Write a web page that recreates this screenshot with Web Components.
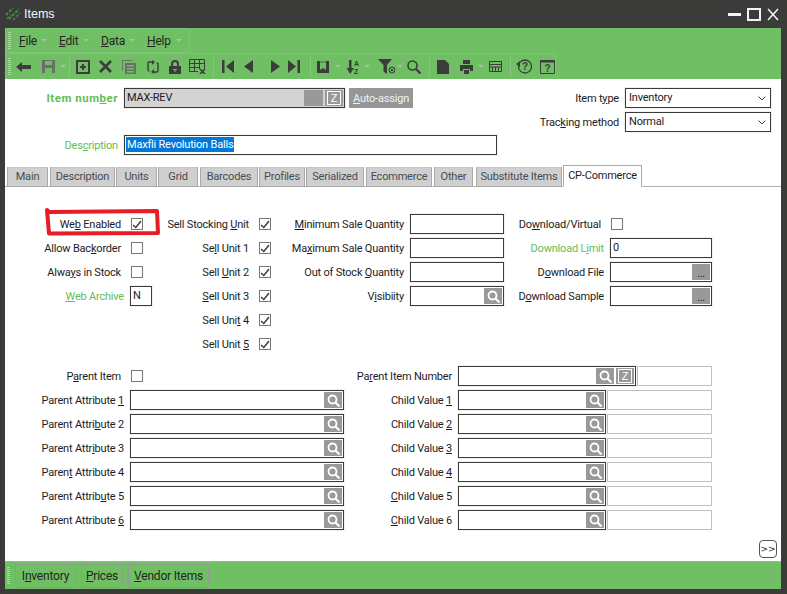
<!DOCTYPE html>
<html>
<head>
<meta charset="utf-8">
<title>Items</title>
<style>
  html, body { margin: 0; padding: 0; width: 787px; height: 594px; overflow: hidden; background: #3b3c3a; }
  body { font: 11px Roboto, "Liberation Sans", sans-serif; letter-spacing: -0.2px; color: #1c1c24; }
</style>
</head>
<body>
<script>
const DARK = '#3c3d3b';
const GREY = '#6c6e6b';
const ICONS = {
  back: [16, 12, `<path fill="${DARK}" d="M0 6 6 1V4H15V8H6V11Z"/>`],
  disk: [13, 13, `<path fill="${GREY}" fill-rule="evenodd" d="M0 0H13V13H0ZM3 1V5H10V1ZM3 8V13H10V8Z"/>`],
  plus: [14, 14, `<path fill="${DARK}" fill-rule="evenodd" d="M0 0H14V14H0ZM2 2V12H12V2ZM6 4H8V6H10V8H8V10H6V8H4V6H6Z"/>`],
  cross: [13, 13, `<path stroke="${DARK}" stroke-width="2.6" d="M1 1 12 12M12 1 1 12"/>`],
  copy: [14, 14, `<path fill="none" stroke="${GREY}" d="M.5 .5H10.5M.5 .5V10.5"/><path fill="${GREY}" fill-rule="evenodd" d="M3 3H14V14H3ZM5 5V6.5H12V5ZM5 8V9.5H12V8ZM5 11V12.5H12V11Z"/>`],
  refresh: [12, 14, `<path fill="none" stroke="${DARK}" stroke-width="1.4" d="M6 2H2Q1 2 1 3V10Q1 11 2.5 11M6 12H10Q11 12 11 11V4Q11 3 9.5 3"/><path fill="${DARK}" d="M5 0 8 2 5 5ZM7 9 4 12 7 14Z"/>`],
  lock: [12, 14, `<path fill="none" stroke="${DARK}" stroke-width="2" d="M3 7V4Q3 1 6 1T9 4V7"/><path fill="${DARK}" fill-rule="evenodd" d="M0 6H12V14H0ZM4 9V10H5.5V12H6.5V10H8V9Z"/>`],
  gridx: [17, 15, `<path fill="none" stroke="${DARK}" d="M.5 .5H15.5V10M.5 .5V12.5H9M.5 4.5H15.5M.5 8.5H11M5.5 .5V12.5M10.5 .5V10"/><path stroke="${DARK}" stroke-width="1.6" d="M11 10 16 15M16 10 11 15"/>`],
  first: [12, 13, `<path fill="${DARK}" d="M0 0H2.5V13H0ZM12 0V13L4 6.5Z"/>`],
  prev: [9, 13, `<path fill="${DARK}" d="M9 0V13L0 6.5Z"/>`],
  next: [9, 13, `<path fill="${DARK}" d="M0 0V13L9 6.5Z"/>`],
  last: [12, 13, `<path fill="${DARK}" d="M0 0 8 6.5 0 13ZM9.5 0H12V13H9.5Z"/>`],
  book: [12, 12, `<path fill="${DARK}" d="M0 0H3V9L6 7 9 9V0H12V12H0Z"/><path fill="${DARK}" d="M3 0H9V2H3Z" opacity=".35"/>`],
  az: [14, 16, `<path fill="${DARK}" d="M3 1H5.5V9H8L4.2 15 .5 9H3Z"/><text x="8" y="7" font-size="7" font-weight="bold" font-family="Liberation Sans" fill="${DARK}">A</text><text x="8" y="14.5" font-size="7" font-weight="bold" font-family="Liberation Sans" fill="${DARK}">Z</text>`],
  filter: [18, 15, `<path fill="${DARK}" d="M0 0H14L9 6V15L5.5 12.5V6Z"/><circle cx="14" cy="11" r="3" fill="none" stroke="${DARK}"/><path stroke="${DARK}" d="M12.5 9.5 15.5 12.5M15.5 9.5 12.5 12.5"/>`],
  find: [14, 14, `<circle cx="5.5" cy="5.5" r="4.5" fill="none" stroke="${DARK}" stroke-width="1.6"/><path stroke="${DARK}" stroke-width="2.2" d="M9 9 13.5 13.5"/>`],
  doc: [12, 14, `<path fill="${DARK}" d="M0 0H8L12 4V14H0Z"/>`],
  print: [13, 14, `<path fill="${DARK}" fill-rule="evenodd" d="M3 0H10V4H3ZM0 5H13V11H10V9H3V11H0ZM4 10H9V14H4Z"/>`],
  calc: [13, 11, `<path fill="none" stroke="${DARK}" d="M.5 .5H12.5V10.5H.5ZM.5 3.5H12.5M.5 6H12.5M3.5 6V10.5M6.5 6V10.5M9.5 6V10.5"/>`],
  help: [16, 15, `<circle cx="9" cy="7.5" r="6.5" fill="none" stroke="${DARK}" stroke-width="1.3"/><path fill="${DARK}" d="M0 5 4 2V8Z"/><text x="9" y="11" font-size="10" font-weight="bold" text-anchor="middle" font-family="Liberation Sans" fill="${DARK}">?</text>`],
  whats: [15, 14, `<path fill="none" stroke="${DARK}" d="M.5 .5H14.5V13.5H.5Z"/><path fill="${DARK}" d="M0 0H15V2.5H0Z"/><text x="7.5" y="12" font-size="10" font-weight="bold" text-anchor="middle" font-family="Liberation Sans" fill="${DARK}">?</text>`],
  drop: [6, 3, `<path fill="#b4b8b2" d="M0 0H6L3 3Z"/>`],
};

class ToolIcon extends HTMLElement {
  connectedCallback() {
    const [w, h, body] = ICONS[this.getAttribute('name')];
    this.attachShadow({ mode: 'open' }).innerHTML = `
      <style>:host { display: block; flex: none; line-height: 0; } svg { display: block; }</style>
      <svg width="${w}" height="${h}" viewBox="0 0 ${w} ${h}">${body}</svg>`;
  }
}
customElements.define('tool-icon', ToolIcon);

class GripBar extends HTMLElement {
  constructor() {
    super();
    this.attachShadow({ mode: 'open' }).innerHTML = `
      <style>
        :host { display: block; flex: none; width: 3px; height: 17px;
          background: repeating-linear-gradient(to bottom, #a9d8a2 0 1px, transparent 1px 2px); }
      </style>`;
  }
}
customElements.define('grip-bar', GripBar);

class AppWindow extends HTMLElement {
  constructor() {
    super();
    this.attachShadow({ mode: 'open' }).innerHTML = `
      <style>
        :host { display: flex; flex-direction: column; width: 787px; height: 594px; background: #3b3c3a; box-sizing: border-box; padding: 0 6px 5px 5px; }
        .title { flex: none; height: 28px; margin: 0 -6px 0 -5px; display: flex; align-items: center; color: #f4f4f4; font: 12.5px "Liberation Sans", sans-serif; letter-spacing: 0; }
        .title svg.logo { margin: 0 3px 0 5px; }
        .buttons { margin-left: auto; display: flex; align-items: center; gap: 6px; padding-right: 8px; }
        .buttons svg { display: block; flex: none; }
        .body { flex: 1; background: #fff; display: flex; flex-direction: column; min-height: 0; }
      </style>
      <div class="title">
        <svg class="logo" width="16" height="16" viewBox="0 0 16 16">
          <path stroke="#3f8f3f" stroke-width="2" stroke-dasharray="3 1.5" d="M1 9 8 2M4 13 14 3"/>
          <path stroke="#5f625e" stroke-width="2" stroke-dasharray="3 1.5" d="M2 13 6 9M8 14 15 7"/>
        </svg>
        <span>Items</span>
        <div class="buttons">
          <svg width="13" height="3"><rect width="13" height="3" fill="#f4f4f4"/></svg>
          <svg width="14" height="13"><rect x="1" y="1" width="12" height="11" fill="none" stroke="#f4f4f4" stroke-width="2"/></svg>
          <svg width="12" height="13"><path stroke="#f4f4f4" stroke-width="1.5" d="M1 1 11 12M11 1 1 12"/></svg>
        </div>
      </div>
      <slot name="bars"></slot>
      <div class="body"><slot></slot></div>
      <slot name="footer"></slot>`;
  }
}
customElements.define('app-window', AppWindow);

class GreenBars extends HTMLElement {
  constructor() {
    super();
    this.attachShadow({ mode: 'open' }).innerHTML = `
      <style>
        :host { display: block; height: 51px; background: #70bf65; }
      </style>
      <slot></slot>`;
  }
}
customElements.define('green-bars', GreenBars);

class MenuBar extends HTMLElement {
  constructor() {
    super();
    this.attachShadow({ mode: 'open' }).innerHTML = `
      <style>
        :host { display: flex; align-items: center; box-sizing: border-box; width: 185px; height: 25px; border: 1px solid #7fc576; border-radius: 2px; padding-left: 2px; font: 12px Roboto, "Liberation Sans", sans-serif; color: #23251f; }
        grip-bar { margin-right: 8px; }
      </style>
      <grip-bar></grip-bar><slot></slot>`;
  }
}
customElements.define('menu-bar', MenuBar);

class MenuItem extends HTMLElement {
  constructor() {
    super();
    this.attachShadow({ mode: 'open' }).innerHTML = `
      <style>
        :host { display: flex; align-items: center; justify-content: space-between; margin-right: 12px; }
      </style>
      <slot></slot><tool-icon name="drop"></tool-icon>`;
  }
}
customElements.define('menu-item', MenuItem);

class ToolBar extends HTMLElement {
  constructor() {
    super();
    this.attachShadow({ mode: 'open' }).innerHTML = `
      <style>
        :host { display: flex; align-items: center; box-sizing: border-box; width: 551px; height: 26px; border: 1px solid #7fc576; border-bottom: 0; padding-left: 2px; }
        ::slotted(.sep) { width: 1px; height: 21px; background: #85c97c; }
      </style>
      <grip-bar></grip-bar><slot></slot>`;
  }
}
customElements.define('tool-bar', ToolBar);

class FormLabel extends HTMLElement {
  constructor() {
    super();
    this.attachShadow({ mode: 'open' }).innerHTML = `
      <style>
        :host { display: flex; align-items: center; justify-content: flex-end; white-space: nowrap; }
        :host([link]) { color: #5fbe55; }
        :host([strong]) { color: #5fbe55; font-weight: bold; font-size: 11.5px; letter-spacing: .5px; }
        :host([inset]) { padding-right: 3px; }
      </style>
      <span><slot></slot></span>`;
  }
}
customElements.define('form-label', FormLabel);

class FormCheck extends HTMLElement {
  connectedCallback() {
    const mark = this.hasAttribute('checked')
      ? `<svg width="10" height="9"><path fill="none" stroke="#3c3d3b" stroke-width="1.5" d="M1 5 3.8 7.5 9 1"/></svg>` : '';
    this.attachShadow({ mode: 'open' }).innerHTML = `
      <style>
        :host { display: flex; align-items: center; }
        .box { box-sizing: border-box; width: 12px; height: 12px; border: 1px solid #777; background: #fff; display: flex; align-items: center; justify-content: center; margin-left: var(--check-inset, 1px); }
      </style>
      <div class="box">${mark}</div>`;
  }
}
customElements.define('form-check', FormCheck);

class FormInput extends HTMLElement {
  connectedCallback() {
    const search = `<svg width="13" height="13" viewBox="0 0 13 13"><circle cx="5.5" cy="5.5" r="4" fill="none" stroke="#fff" stroke-width="1.8"/><path stroke="#fff" stroke-width="2.2" d="M8.5 8.5 12.5 12.5"/></svg>`;
    const value = this.getAttribute('value') || '';
    let btns = '';
    if (this.hasAttribute('blank')) btns += `<div class="btn wide"></div>`;
    if (this.hasAttribute('lookup')) btns += `<div class="btn">${search}</div>`;
    if (this.hasAttribute('more')) btns += `<div class="btn dots">...</div>`;
    if (this.hasAttribute('zoom')) btns += `<div class="btn zoom"><span>Z</span></div>`;
    this.attachShadow({ mode: 'open' }).innerHTML = `
      <style>
        :host { display: flex; align-items: center; }
        .input { box-sizing: border-box; flex: 1; width: var(--w, auto); height: 20px; border: 1px solid #3b3c3a; box-shadow: 0 0 0 1px #f1f1ec; background: #fff; display: flex; padding: 1px; align-items: stretch; overflow: hidden; }
        :host([readonly]) .input { background: #d3d3d3; }
        .text { flex: 1; line-height: 15px; padding-left: 1px; white-space: nowrap; overflow: hidden; }
        .text span.sel { background: #0078d7; color: #fff; display: inline-block; padding: 0 1px; margin-left: -1px; }
        .btn { flex: none; width: 18px; background: #999; display: flex; align-items: center; justify-content: center; }
        .btn.wide { width: 19px; }
        .btn.dots { color: #222; align-items: flex-end; line-height: 12px; }
        .btn.zoom { margin-left: 2px; }
        .btn.zoom span { box-sizing: border-box; width: 14px; height: 14px; border: 1px solid #fff; color: #fff; font: 11px/12px "Liberation Sans", sans-serif; text-align: center; }
      </style>
      <div class="input">
        <div class="text">${this.hasAttribute('selected') ? `<span class="sel">${value}</span>` : value}</div>
        ${btns}
      </div>`;
  }
}
customElements.define('form-input', FormInput);

class FormBox extends HTMLElement {
  constructor() {
    super();
    this.attachShadow({ mode: 'open' }).innerHTML = `
      <style>
        :host { display: block; box-sizing: border-box; height: 20px; border: 1px solid #c0c0c0; background: #fff; }
      </style>`;
  }
}
customElements.define('form-box', FormBox);

class FormSelect extends HTMLElement {
  connectedCallback() {
    this.attachShadow({ mode: 'open' }).innerHTML = `
      <style>
        :host { display: flex; align-items: center; box-sizing: border-box; width: 146px; height: 20px; border: 1px solid #3b3c3a; box-shadow: 0 0 0 1px #f1f1ec; padding: 0 4px 2px 3px; background: #fff; justify-content: space-between; line-height: 15px; }
        svg { display: block; margin-top: 2px; }
      </style>
      <span>${this.getAttribute('value')}</span>
      <svg width="8" height="5"><path fill="none" stroke="#3c3d3b" d="M.5 .5 4 4 7.5 .5"/></svg>`;
  }
}
customElements.define('form-select', FormSelect);

class FormColumn extends HTMLElement {
  constructor() {
    super();
    this.attachShadow({ mode: 'open' }).innerHTML = `
      <style>
        :host { display: grid; grid-template-columns: var(--lab) var(--fld); grid-auto-rows: 24px; align-content: start; }
        ::slotted(:nth-child(even)) { margin-left: var(--field-gap, 6px); align-self: center; }
      </style>
      <slot></slot>`;
  }
}
customElements.define('form-column', FormColumn);

class FieldGroup extends HTMLElement {
  constructor() {
    super();
    this.attachShadow({ mode: 'open' }).innerHTML = `
      <style>:host { display: flex; gap: 1px; align-items: center; }</style><slot></slot>`;
  }
}
customElements.define('field-group', FieldGroup);

class TabStrip extends HTMLElement {
  constructor() {
    super();
    this.attachShadow({ mode: 'open' }).innerHTML = `
      <style>
        :host { display: flex; align-items: flex-end; height: 22px; padding-left: 2px; box-sizing: border-box; border-bottom: 1px solid #b0b0b0; flex: none; }
      </style>
      <slot></slot>`;
  }
}
customElements.define('tab-strip', TabStrip);

class TabItem extends HTMLElement {
  constructor() {
    super();
    this.attachShadow({ mode: 'open' }).innerHTML = `
      <style>
        :host { display: flex; align-items: center; justify-content: center; box-sizing: border-box; height: 20px; margin-bottom: -1px; padding-bottom: 2px; background: #cfcfcf; border: 1px solid #a9a9a9; border-top-color: #c4c4c4; color: #474c52; white-space: nowrap; }
        :host([active]) { height: 22px; background: #fff; border-color: #a9a9a9; border-bottom-color: #fff; color: #1c1c24; padding-bottom: 2px; }
      </style>
      <slot></slot>`;
  }
}
customElements.define('tab-item', TabItem);

class BottomBar extends HTMLElement {
  constructor() {
    super();
    this.attachShadow({ mode: 'open' }).innerHTML = `
      <style>
        :host { display: flex; align-items: center; box-sizing: border-box; height: 28px; background: #70bf65; border-top: 1px solid #9bb896; padding-left: 2px; gap: 2px; font-size: 12px; color: #23251f; }
        grip-bar { margin-right: 3px; }
      </style>
      <grip-bar></grip-bar><slot></slot>`;
  }
}
customElements.define('bottom-bar', BottomBar);

class BarButton extends HTMLElement {
  constructor() {
    super();
    this.attachShadow({ mode: 'open' }).innerHTML = `
      <style>
        :host { display: flex; align-items: center; justify-content: center; box-sizing: border-box; height: 24px; border: 1px solid #8d9f8a; margin-right: 3px; }
      </style>
      <span><slot></slot></span>`;
  }
}
customElements.define('bar-button', BarButton);

class RedMark extends HTMLElement {
  constructor() {
    super();
    this.attachShadow({ mode: 'open' }).innerHTML = `
      <style>:host { position: absolute; left: 44px; top: 206px; width: 118px; height: 32px; display: block; pointer-events: none; }</style>
      <svg width="118" height="32"><path fill="none" stroke="#e81c24" stroke-width="4" stroke-linejoin="round" stroke-linecap="round" d="M3 4 5 6 113 5 114 27 5 27.5 3 4"/></svg>`;
  }
}
customElements.define('red-mark', RedMark);

class ExpandButton extends HTMLElement {
  constructor() {
    super();
    this.attachShadow({ mode: 'open' }).innerHTML = `
      <style>
        :host { position: absolute; left: 759px; top: 540px; width: 18px; height: 18px; box-sizing: border-box; border: 1px solid #555; border-radius: 4px; display: flex; align-items: center; justify-content: center; font: 9px "DejaVu Sans", sans-serif; letter-spacing: 0; color: #222; background: #fff; }
      </style>&gt;&gt;`;
  }
}
customElements.define('expand-button', ExpandButton);

class ItemHeader extends HTMLElement {
  constructor() {
    super();
    this.attachShadow({ mode: 'open' }).innerHTML = `
      <style>
        :host { display: flex; flex-direction: column; flex: none; box-sizing: border-box; height: 86px; padding: 9px 10px 0 0; }
        .top { display: flex; justify-content: space-between; }
        .left, .row { display: flex; gap: 6px; }
        .left { align-items: flex-start; }
        .right { display: flex; flex-direction: column; gap: 4px; }
        .right .row { justify-content: flex-end; }
        .desc { margin-top: 3px; }
        ::slotted([slot$="lab"]) { width: 113px; height: 20px; }
        ::slotted([slot="tlab"]), ::slotted([slot="mlab"]) { width: auto; }
      </style>
      <div class="top">
        <div class="left"><slot name="numlab"></slot><slot name="num"></slot><slot name="auto"></slot></div>
        <div class="right">
          <div class="row"><slot name="tlab"></slot><slot name="type"></slot></div>
          <div class="row"><slot name="mlab"></slot><slot name="method"></slot></div>
        </div>
      </div>
      <div class="row desc"><slot name="dlab"></slot><slot name="desc"></slot></div>`;
  }
}
customElements.define('item-header', ItemHeader);

class AutoButton extends HTMLElement {
  constructor() {
    super();
    this.attachShadow({ mode: 'open' }).innerHTML = `
      <style>
        :host { display: flex; align-items: center; justify-content: center; box-sizing: border-box; width: 64px; height: 20px; margin-left: -2px; background: #969696; color: #f2f2f2; }
      </style>
      <span><slot></slot></span>`;
  }
}
customElements.define('auto-button', AutoButton);

class TabPanel extends HTMLElement {
  constructor() {
    super();
    this.attachShadow({ mode: 'open' }).innerHTML = `
      <style>
        :host { display: flex; flex-direction: column; flex: 1; box-sizing: border-box; padding-top: 25px; }
        .upper, .lower { display: flex; }
        .upper { height: 152px; }
      </style>
      <div class="upper"><slot name="upper"></slot></div>
      <div class="lower"><slot name="lower"></slot></div>`;
  }
}
customElements.define('tab-panel', TabPanel);
</script>

<app-window>
  <green-bars slot="bars">
    <menu-bar>
      <menu-item style="width:28px"><span><u>F</u>ile</span></menu-item>
      <menu-item style="width:30px"><span><u>E</u>dit</span></menu-item>
      <menu-item style="width:34px"><span><u>D</u>ata</span></menu-item>
      <menu-item style="width:35px;margin-right:0"><span><u>H</u>elp</span></menu-item>
    </menu-bar>
    <tool-bar>
      <tool-icon name="back" style="margin-left:5px"></tool-icon>
      <tool-icon name="disk" style="margin-left:10px"></tool-icon>
      <tool-icon name="drop" style="margin-left:5px"></tool-icon>
      <div class="sep" style="margin-left:3px"></div>
      <tool-icon name="plus" style="margin-left:6px"></tool-icon>
      <tool-icon name="cross" style="margin-left:9px"></tool-icon>
      <tool-icon name="copy" style="margin-left:10px"></tool-icon>
      <tool-icon name="refresh" style="margin-left:11px"></tool-icon>
      <tool-icon name="lock" style="margin-left:10px"></tool-icon>
      <tool-icon name="gridx" style="margin-left:8px"></tool-icon>
      <div class="sep" style="margin-left:7px"></div>
      <tool-icon name="first" style="margin-left:8px"></tool-icon>
      <tool-icon name="prev" style="margin-left:10px"></tool-icon>
      <tool-icon name="next" style="margin-left:18px"></tool-icon>
      <tool-icon name="last" style="margin-left:8px"></tool-icon>
      <div class="sep" style="margin-left:10px"></div>
      <tool-icon name="book" style="margin-left:7px"></tool-icon>
      <tool-icon name="drop" style="margin-left:6px"></tool-icon>
      <tool-icon name="az" style="margin-left:5px"></tool-icon>
      <tool-icon name="drop" style="margin-left:4px"></tool-icon>
      <tool-icon name="filter" style="margin-left:8px"></tool-icon>
      <tool-icon name="drop" style="margin-left:1px"></tool-icon>
      <tool-icon name="find" style="margin-left:4px"></tool-icon>
      <div class="sep" style="margin-left:8px"></div>
      <tool-icon name="doc" style="margin-left:7px"></tool-icon>
      <tool-icon name="print" style="margin-left:11px"></tool-icon>
      <tool-icon name="drop" style="margin-left:5px"></tool-icon>
      <tool-icon name="calc" style="margin-left:5px"></tool-icon>
      <div class="sep" style="margin-left:8px"></div>
      <tool-icon name="help" style="margin-left:5px"></tool-icon>
      <tool-icon name="whats" style="margin-left:8px"></tool-icon>
    </tool-bar>
  </green-bars>

  <item-header>
    <form-label slot="numlab" strong>Item num<u>b</u>er</form-label>
    <form-input slot="num" readonly blank zoom value="MAX-REV" style="width:221px;--w:221px"></form-input>
    <auto-button slot="auto"><u>A</u>uto-assign</auto-button>
    <form-label slot="tlab">Item t<u>y</u>pe</form-label>
    <form-select slot="type" value="Inventory"></form-select>
    <form-label slot="mlab">Trac<u>k</u>ing method</form-label>
    <form-select slot="method" value="Normal"></form-select>
    <form-label slot="dlab" link>Des<u>c</u>ription</form-label>
    <form-input slot="desc" selected value="Maxfli Revolution Balls" style="width:373px"></form-input>
  </item-header>

  <tab-strip>
    <tab-item style="width:41px;margin-right:2px">Main</tab-item>
    <tab-item style="width:65px;margin-right:1px">Description</tab-item>
    <tab-item style="width:41px;margin-right:1px">Units</tab-item>
    <tab-item style="width:40px;margin-right:2px">Grid</tab-item>
    <tab-item style="width:58px;margin-right:1px">Barcodes</tab-item>
    <tab-item style="width:46px;margin-right:1px">Profiles</tab-item>
    <tab-item style="width:58px;margin-right:2px">Serialized</tab-item>
    <tab-item style="width:66px;margin-right:2px">Ecommerce</tab-item>
    <tab-item style="width:39px;margin-right:3px">Other</tab-item>
    <tab-item style="width:86px;margin-right:1px">Substitute Items</tab-item>
    <tab-item active style="width:79px">CP-Commerce</tab-item>
  </tab-strip>

  <tab-panel>
    <form-column slot="upper" style="--lab:119px;--fld:36px">
      <form-label inset>We<u>b</u> Enabled</form-label><form-check checked></form-check>
      <form-label inset>Allow Bac<u>k</u>order</form-label><form-check></form-check>
      <form-label inset>Alwa<u>y</u>s in Stock</form-label><form-check></form-check>
      <form-label link><u>W</u>eb Archive</form-label><form-input value="N" style="width:22px"></form-input>
    </form-column>
    <form-column slot="upper" style="--lab:89px;--fld:26px;--check-inset:4px">
      <form-label>Sell Stocking <u>U</u>nit</form-label><form-check checked></form-check>
      <form-label>Se<u>l</u>l Unit 1</form-label><form-check checked></form-check>
      <form-label>Sell <u>U</u>nit 2</form-label><form-check checked></form-check>
      <form-label><u>S</u>ell Unit 3</form-label><form-check checked></form-check>
      <form-label>Sell Uni<u>t</u> 4</form-label><form-check checked></form-check>
      <form-label>Sell Unit <u>5</u></form-label><form-check checked></form-check>
    </form-column>
    <form-column slot="upper" style="--lab:129px;--fld:100px">
      <form-label><u>M</u>inimum Sale Quantity</form-label><form-input></form-input>
      <form-label>Ma<u>x</u>imum Sale Quantity</form-label><form-input></form-input>
      <form-label>Out of Stock <u>Q</u>uantity</form-label><form-input></form-input>
      <form-label>V<u>i</u>sibiity</form-label><form-input lookup></form-input>
    </form-column>
    <form-column slot="upper" style="--lab:100px;--fld:108px">
      <form-label inset>Do<u>w</u>nload/Virtual</form-label><form-check></form-check>
      <form-label link>Download L<u>i</u>mit</form-label><form-input value="0"></form-input>
      <form-label>D<u>o</u>wnload File</form-label><form-input more></form-input>
      <form-label>D<u>o</u>wnload Sample</form-label><form-input more></form-input>
    </form-column>

    <form-column slot="lower" style="--lab:119px;--fld:220px">
      <form-label inset>P<u>a</u>rent Item</form-label><form-check></form-check>
      <form-label>Parent Attribute <u>1</u></form-label><form-input lookup></form-input>
      <form-label>Parent Attri<u>b</u>ute 2</form-label><form-input lookup></form-input>
      <form-label>Parent Attr<u>i</u>bute 3</form-label><form-input lookup></form-input>
      <form-label>Paren<u>t</u> Attribute 4</form-label><form-input lookup></form-input>
      <form-label>Parent Attrib<u>u</u>te 5</form-label><form-input lookup></form-input>
      <form-label>Parent Attribute <u>6</u></form-label><form-input lookup></form-input>
    </form-column>
    <form-column slot="lower" style="--lab:108px;--fld:260px">
      <form-label>Pa<u>r</u>ent Item Number</form-label>
      <field-group><form-input lookup zoom style="width:178px"></form-input><form-box style="width:75px"></form-box></field-group>
      <form-label>Child Value <u>1</u></form-label>
      <field-group><form-input lookup style="width:148px"></form-input><form-box style="width:105px"></form-box></field-group>
      <form-label>Child Value <u>2</u></form-label>
      <field-group><form-input lookup style="width:148px"></form-input><form-box style="width:105px"></form-box></field-group>
      <form-label>Child Value <u>3</u></form-label>
      <field-group><form-input lookup style="width:148px"></form-input><form-box style="width:105px"></form-box></field-group>
      <form-label>Child Value <u>4</u></form-label>
      <field-group><form-input lookup style="width:148px"></form-input><form-box style="width:105px"></form-box></field-group>
      <form-label><u>C</u>hild Value 5</form-label>
      <field-group><form-input lookup style="width:148px"></form-input><form-box style="width:105px"></form-box></field-group>
      <form-label><u>C</u>hild Value 6</form-label>
      <field-group><form-input lookup style="width:148px"></form-input><form-box style="width:105px"></form-box></field-group>
    </form-column>
  </tab-panel>

  <bottom-bar slot="footer">
    <bar-button style="width:61px">I<u>n</u>ventory</bar-button>
    <bar-button style="width:42px"><u>P</u>rices</bar-button>
    <bar-button style="width:81px"><u>V</u>endor Items</bar-button>
  </bottom-bar>
</app-window>
<red-mark></red-mark>
<expand-button></expand-button>
</body>
</html>
